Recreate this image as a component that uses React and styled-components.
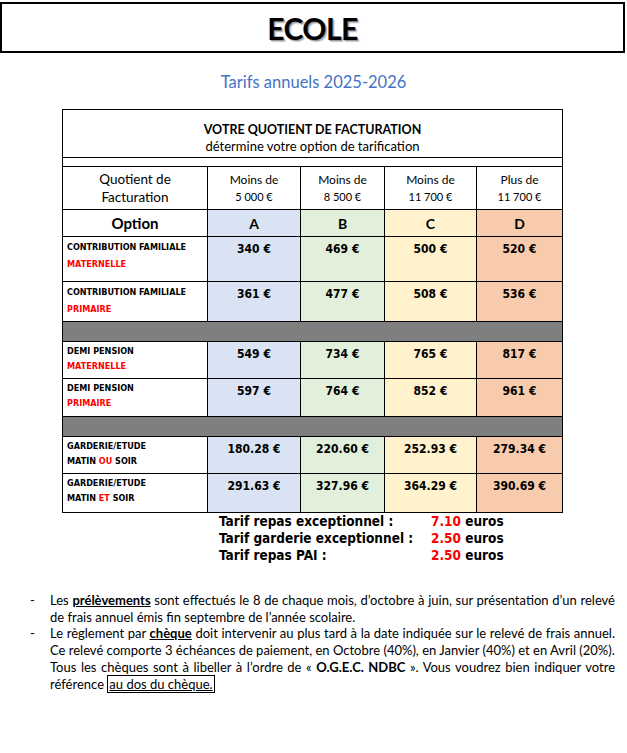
import React from 'react';
import styled, { createGlobalStyle } from 'styled-components';

const GlobalStyle = createGlobalStyle`
  body {
    margin: 0;
    background: #fff;
    color: #000;
    font-family: Lato, "Liberation Sans", sans-serif;
  }
`;

const tahoma = `"DejaVu Sans Condensed", "DejaVu Sans", sans-serif`;

const columns = [
  { letter: 'A', top: 'Moins de', bottom: '5 000 €', bg: '#dae3f3' },
  { letter: 'B', top: 'Moins de', bottom: '8 500 €', bg: '#e2efda' },
  { letter: 'C', top: 'Moins de', bottom: '11 700 €', bg: '#fff2cc' },
  { letter: 'D', top: 'Plus de', bottom: '11 700 €', bg: '#f8cbad' },
];

const groups = [
  [
    { h: 45, lh: 17, first: 'CONTRIBUTION FAMILIALE', second: <Red>MATERNELLE</Red>, prices: ['340 €', '469 €', '500 €', '520 €'] },
    { h: 40, lh: 17, first: 'CONTRIBUTION FAMILIALE', second: <Red>PRIMAIRE</Red>, prices: ['361 €', '477 €', '508 €', '536 €'] },
  ],
  [
    { h: 37, lh: 15, first: 'DEMI PENSION', second: <Red>MATERNELLE</Red>, prices: ['549 €', '734 €', '765 €', '817 €'] },
    { h: 38, lh: 15, first: 'DEMI PENSION', second: <Red>PRIMAIRE</Red>, prices: ['597 €', '764 €', '852 €', '961 €'] },
  ],
  [
    { h: 37, lh: 15, first: 'GARDERIE/ETUDE', second: <>MATIN <Red>OU</Red> SOIR</>, prices: ['180.28 €', '220.60 €', '252.93 €', '279.34 €'] },
    { h: 39, lh: 15, first: 'GARDERIE/ETUDE', second: <>MATIN <Red>ET</Red> SOIR</>, prices: ['291.63 €', '327.96 €', '364.29 €', '390.69 €'] },
  ],
];

const extras = [
  ['Tarif repas exceptionnel :', '7.10'],
  ['Tarif garderie exceptionnel :', '2.50'],
  ['Tarif repas PAI :', '2.50'],
];

function Red({ children }) {
  return <RedText>{children}</RedText>;
}

const App = () => {
  return (
    <Page>
      <GlobalStyle />
      <HeaderBox>
        <SchoolName>ECOLE</SchoolName>
      </HeaderBox>
      <Subtitle>Tarifs annuels 2025-2026</Subtitle>

      <PriceTable>
        <colgroup>
          <col style={{ width: 145 }} />
          <col style={{ width: 93 }} />
          <col style={{ width: 84 }} />
          <col style={{ width: 92 }} />
          <col style={{ width: 86 }} />
        </colgroup>
        <tbody>
          <Row $h={48}>
            <TitleCell colSpan={5}>
              <strong>VOTRE QUOTIENT DE FACTURATION</strong>
              <br />
              détermine votre option de tarification
            </TitleCell>
          </Row>
          <Row $h={9}>
            <Cell colSpan={5} />
          </Row>
          <Row $h={43}>
            <HeadCell>
              Quotient de
              <br />
              Facturation
            </HeadCell>
            {columns.map((c) => (
              <RangeCell key={c.letter}>
                {c.top}
                <Small>{c.bottom}</Small>
              </RangeCell>
            ))}
          </Row>
          <Row $h={27}>
            <OptionCell>Option</OptionCell>
            {columns.map((c) => (
              <LetterCell key={c.letter} $bg={c.bg}>
                {c.letter}
              </LetterCell>
            ))}
          </Row>
          {groups.map((group, gi) => (
            <React.Fragment key={gi}>
              {gi > 0 && (
                <Row $h={20}>
                  <GrayCell colSpan={5} />
                </Row>
              )}
              {group.map((r, ri) => (
                <Row key={ri} $h={r.h}>
                  <LabelCell $lh={r.lh}>
                    {r.first}
                    <br />
                    {r.second}
                  </LabelCell>
                  {r.prices.map((p, pi) => (
                    <PriceCell key={pi} $bg={columns[pi].bg}>
                      {p}
                    </PriceCell>
                  ))}
                </Row>
              ))}
            </React.Fragment>
          ))}
        </tbody>
      </PriceTable>

      <Extras>
        {extras.map(([label, value]) => (
          <React.Fragment key={label}>
            <span>{label}</span>
            <span>
              <RedText>{value}</RedText> euros
            </span>
          </React.Fragment>
        ))}
      </Extras>

      <Notes>
        <Note>
          <Line $justify>
            Les <Strong>prélèvements</Strong> sont effectués le 8 de chaque mois, d’octobre à juin, sur présentation d’un relevé
          </Line>
          <Line>de frais annuel émis fin septembre de l’année scolaire.</Line>
        </Note>
        <Note>
          <Line $justify>
            Le règlement par <Strong>chèque</Strong> doit intervenir au plus tard à la date indiquée sur le relevé de frais annuel.
          </Line>
          <Line>Ce relevé comporte 3 échéances de paiement, en Octobre (40%), en Janvier (40%) et en Avril (20%).</Line>
          <Line $justify>
            Tous les chèques sont à libeller à l’ordre de « <b>O.G.E.C. NDBC</b> ». Vous voudrez bien indiquer votre
          </Line>
          <Line>
            référence <Boxed>au dos du chèque.</Boxed>
          </Line>
        </Note>
      </Notes>
    </Page>
  );
};

const Page = styled.div`
  width: 627px;
  padding-top: 2px;
  padding-bottom: 40px;
`;

const HeaderBox = styled.div`
  box-sizing: border-box;
  height: 51px;
  margin: 0 2px 0 0;
  border: 2px solid #000;
  display: flex;
  align-items: center;
  justify-content: center;
`;

const SchoolName = styled.h1`
  margin: 0;
  font-family: Lato, sans-serif;
  font-size: 30px;
  font-weight: 700;
  letter-spacing: -0.5px;
  text-shadow: 1px 1px 0 #9a9a9a, 2px 2px 1px #c8c8c8;
`;

const Subtitle = styled.div`
  margin-top: 19px;
  text-align: center;
  color: #4472c4;
  font-size: 16.5px;
  line-height: 20px;
`;

const PriceTable = styled.table`
  margin: 17px 0 0 62px;
  width: 500px;
  border-collapse: collapse;
  table-layout: fixed;
`;

const Row = styled.tr`
  height: ${({ $h }) => $h}px;
`;

const Cell = styled.td`
  border: 1px solid #000;
  padding: 0;
  background: ${({ $bg }) => $bg || '#fff'};
`;

const TitleCell = styled(Cell)`
  text-align: center;
  vertical-align: top;
  padding-top: 11px;
  font-size: 13px;
  line-height: 17px;

  strong {
    font-size: 12.5px;
  }
`;

const HeadCell = styled(Cell)`
  text-align: center;
  font-size: 13.5px;
  line-height: 18px;
`;

const RangeCell = styled(Cell)`
  text-align: center;
  font-size: 12px;
  line-height: 17px;
`;

const Small = styled.div`
  font-size: 11px;
`;

const OptionCell = styled(Cell)`
  text-align: center;
  font-weight: 700;
  font-size: 15px;
`;

const LetterCell = styled(Cell)`
  text-align: center;
  font-weight: 700;
  font-size: 14px;
`;

const GrayCell = styled(Cell)`
  background: #7f7f7f;
`;

const LabelCell = styled(Cell)`
  vertical-align: top;
  padding: 2px 4px 0;
  font-family: ${tahoma};
  font-stretch: condensed;
  font-weight: 700;
  font-size: 9px;
  line-height: ${({ $lh }) => $lh}px;
`;

const PriceCell = styled(Cell)`
  vertical-align: top;
  padding-top: 4px;
  text-align: center;
  font-family: ${tahoma};
  font-stretch: condensed;
  font-weight: 700;
  font-size: 12px;
  line-height: 16px;
`;

const RedText = styled.span`
  color: #ff0000;
`;

const Extras = styled.div`
  margin-left: 219px;
  display: grid;
  grid-template-columns: 212px auto;
  font-family: ${tahoma};
  font-stretch: condensed;
  font-weight: 700;
  font-size: 13.5px;
  line-height: 17px;
`;

const Notes = styled.ul`
  margin: 28px 0 0;
  padding: 0 12px 0 50px;
  list-style: none;
  font-size: 13px;
  line-height: 16.7px;
`;

const Note = styled.li`
  position: relative;
  &::before {
    content: '-';
    position: absolute;
    left: -20px;
    top: 0;
  }
`;

const Line = styled.span`
  display: block;
  white-space: nowrap;
  ${({ $justify }) =>
    $justify &&
    `
    white-space: normal;
    text-align: justify;
    text-align-last: justify;
  `}
`;

const Strong = styled.b`
  text-decoration: underline;
`;

const Boxed = styled.span`
  border: 1px solid #000;
  text-decoration: underline;
  padding: 0 1px;
`;

export default App;
